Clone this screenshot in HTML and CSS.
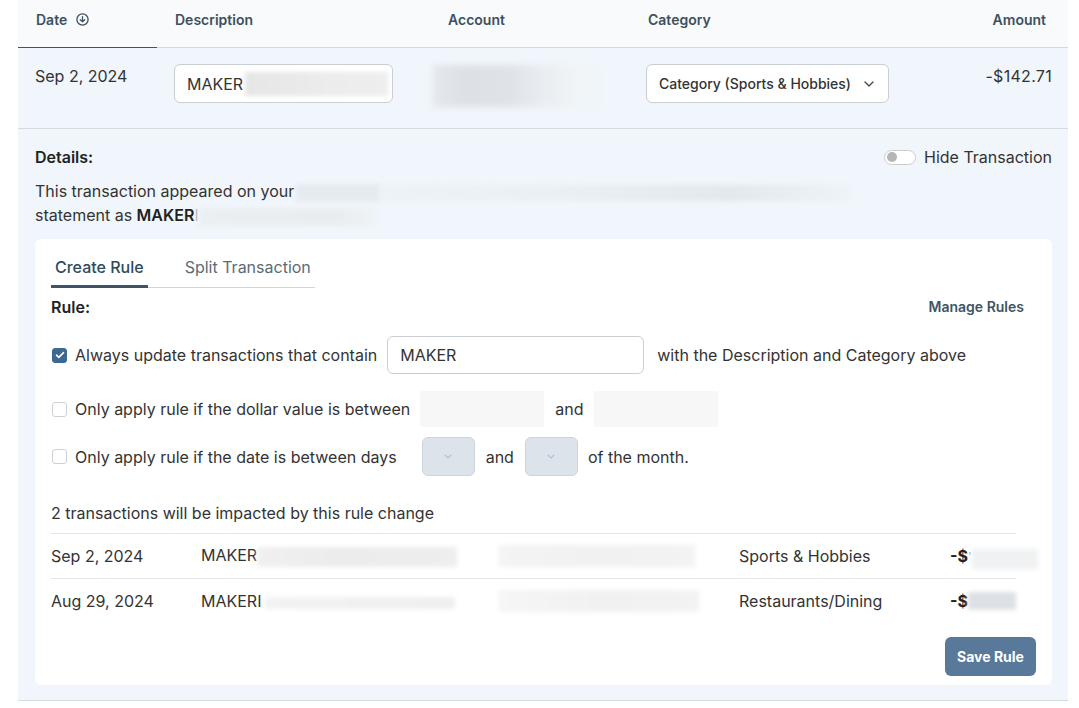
FILE: index.html
```html
<!DOCTYPE html>
<html lang="en">
<head>
<meta charset="utf-8">
<title>Transaction</title>
<link rel="stylesheet" href="styles.css">
</head>
<body>
<div class="table">
  <div class="thead">
    <div class="th th-date">Date
      <svg class="sort-icon" width="13" height="13" viewBox="0 0 13 13"><circle cx="6.5" cy="6.5" r="5.6" fill="none" stroke="#3d5060" stroke-width="1.3"/><path d="M6.5 3.6v5.2M4.3 6.7l2.2 2.2 2.2-2.2" fill="none" stroke="#3d5060" stroke-width="1.3" stroke-linecap="round" stroke-linejoin="round"/></svg>
    </div>
    <div class="th">Description</div>
    <div class="th">Account</div>
    <div class="th">Category</div>
    <div class="th th-amount">Amount</div>
  </div>

  <div class="trow">
    <div class="td td-date">Sep 2, 2024</div>
    <div class="td td-desc">
      <div class="text-input desc-input">MAKER<span class="blur blur-desc"></span></div>
    </div>
    <div class="td td-account"><span class="blur blur-account"></span></div>
    <div class="td td-cat">
      <div class="select-box">Category (Sports &amp; Hobbies)
        <svg class="chev" width="10" height="6" viewBox="0 0 10 6"><path d="M1 1l4 4 4-4" fill="none" stroke="#444" stroke-width="1.3" stroke-linecap="round" stroke-linejoin="round"/></svg>
      </div>
    </div>
    <div class="td td-amount">-$142.71</div>
  </div>

  <div class="details">
    <div class="details-head">
      <div class="details-title">Details:</div>
      <label class="toggle-wrap"><span class="toggle"><span class="knob"></span></span>Hide Transaction</label>
    </div>
    <p class="statement">This transaction appeared on your<span class="blur blur-s1"></span><span class="blur blur-s1b"></span><br>statement as <b>MAKER</b><span class="bar-i">I</span><span class="blur blur-s2"></span></p>

    <div class="card">
      <div class="tabs">
        <div class="tab active">Create Rule</div>
        <div class="tab">Split Transaction</div>
      </div>

      <div class="rule-head">
        <div class="rule-title">Rule:</div>
        <a class="manage">Manage Rules</a>
      </div>

      <div class="rule-line line1">
        <span class="cb checked"><svg width="10" height="8" viewBox="0 0 10 8"><path d="M1.5 4.2l2.3 2.2L8.5 1.6" fill="none" stroke="#fff" stroke-width="1.6" stroke-linecap="round" stroke-linejoin="round"/></svg></span>
        <span class="lbl">Always update transactions that contain</span>
        <div class="text-input contain-input">MAKER</div>
        <span class="lbl after-input">with the Description and Category above</span>
      </div>

      <div class="rule-line line2">
        <span class="cb"></span>
        <span class="lbl">Only apply rule if the dollar value is between</span>
        <div class="disabled-input"></div>
        <span class="lbl and">and</span>
        <div class="disabled-input"></div>
      </div>

      <div class="rule-line line3">
        <span class="cb"></span>
        <span class="lbl">Only apply rule if the date is between days</span>
        <div class="day-select first"><svg width="8" height="5" viewBox="0 0 8 5"><path d="M1 1l3 3 3-3" fill="none" stroke="#b8c2cc" stroke-width="1.1" stroke-linecap="round"/></svg></div>
        <span class="lbl and">and</span>
        <div class="day-select"><svg width="8" height="5" viewBox="0 0 8 5"><path d="M1 1l3 3 3-3" fill="none" stroke="#b8c2cc" stroke-width="1.1" stroke-linecap="round"/></svg></div>
        <span class="lbl month">of the month.</span>
      </div>

      <div class="impact">2 transactions will be impacted by this rule change</div>
      <div class="impact-list">
        <div class="irow">
          <div>Sep 2, 2024</div>
          <div>MAKER<span class="blur blur-l1"></span></div>
          <div><span class="blur blur-la"></span></div>
          <div>Sports &amp; Hobbies</div>
          <div class="iamt"><b>-$</b><span class="tick">'</span><span class="blur blur-amt1"></span></div>
        </div>
        <div class="irow">
          <div>Aug 29, 2024</div>
          <div>MAKERI<span class="blur blur-l2"></span></div>
          <div><span class="blur blur-lb"></span></div>
          <div>Restaurants/Dining</div>
          <div class="iamt"><b>-$</b><span class="blur blur-amt2"></span></div>
        </div>
      </div>

      <div class="actions">
        <button class="save">Save Rule</button>
      </div>
    </div>
  </div>
</div>
</body>
</html>
```

FILE: styles.css
```css
* { box-sizing: border-box; }
html, body { margin: 0; padding: 0; }
body {
  background: #ffffff;
  font-family: Inter, "Noto Sans", "Liberation Sans", sans-serif;
  font-size: 16px;
  color: #333;
}

.table {
  margin-left: 18px;
  width: 1050px;
}

.thead, .trow {
  display: grid;
  grid-template-columns: 139px 273px 200px 1fr 160px;
}

.thead {
  background: #f8fafb;
  height: 48px;
}
.th {
  padding: 12px 0 0 18px;
  font-size: 14px;
  font-weight: 600;
  line-height: 16px;
  color: #3d5060;
  border-bottom: 1px solid #d4dade;
  display: flex;
  align-items: flex-start;
}
.th-date { border-bottom-color: #3d5566; }
.sort-icon { margin-left: 9px; margin-top: 1px; }
.th-amount { justify-content: flex-end; padding-right: 22px; }

.trow {
  background: #f0f6fb;
  height: 81px;
  border-bottom: 1px solid #d4dade;
}
.td { padding-top: 16px; line-height: 24px; }
.td-date { padding-left: 17px; }
.td-desc { padding-left: 17px; }
.td-account { padding-left: 3px; padding-top: 17px; }
.td-cat { padding-left: 16px; }
.td-amount { text-align: right; padding-right: 16px; letter-spacing: 0.3px; }

.text-input {
  background: #fff;
  border: 1px solid #c9ced3;
  border-radius: 6px;
  padding-left: 12px;
  display: flex;
  align-items: center;
}
.desc-input { width: 219px; height: 39px; }

.select-box {
  width: 243px;
  height: 39px;
  background: #fff;
  border: 1px solid #c9ced3;
  border-radius: 6px;
  padding: 0 14px 0 12px;
  display: flex;
  align-items: center;
  justify-content: space-between;
  font-size: 14px;
  font-weight: 500;
  color: #333;
}
.chev { margin-top: 1px; }

.blur {
  display: inline-block;
  filter: blur(2px);
  vertical-align: middle;
}
.blur-desc { width: 143px; height: 24px; background: linear-gradient(90deg, #e6e6e6, #ececec 60%, #eeeeee); margin-left: 2px; }
.blur-account { width: 168px; height: 42px; filter: blur(3px); background: linear-gradient(90deg, #e4e8ec 0%, #dde1e6 20%, #dfe3e7 45%, #e9edf1 65%, #f0f4f7 85%, rgba(240,246,251,0) 100%); }
.blur-s1 { width: 84px; height: 18px; background: #e6ebef; margin-left: 2px; }
.blur-s1b { width: 470px; height: 16px; background: linear-gradient(90deg, rgba(235,240,244,0.6), #eaeff3 40%, #e3e8ec 75%, rgba(233,238,242,0.3)); }
.blur-s2 { width: 178px; height: 18px; background: linear-gradient(90deg, #eceff2, #eaedf0 80%, rgba(236,240,243,0.4)); }
.bar-i { color: #aaa; font-weight: 300; }
.blur-l1 { width: 200px; height: 20px; background: linear-gradient(90deg, #f0f0f0, #ececec 40%, #eeeeee); }
.blur-l2 { width: 190px; height: 12px; background: linear-gradient(90deg, #f2f2f2, #efefef); margin-left: 4px; }
.blur-la { width: 196px; height: 22px; background: linear-gradient(90deg, #f4f4f4, #f1f1f1 50%, #f3f3f3); }
.blur-lb { width: 200px; height: 22px; background: linear-gradient(90deg, #f6f6f6, #f1f1f1 50%, #f3f3f3); }
.blur-amt1 { width: 66px; height: 20px; background: #f0f1f3; margin-top: 6px; }
.blur-amt2 { width: 48px; height: 18px; background: #dde1e6; }
.tick { color: #aaa; font-size: 12px; }

.details {
  background: #f0f6fb;
  padding: 16px 16px 15px 17px;
  border-bottom: 1px solid #d4dade;
}
.details-head {
  display: flex;
  justify-content: space-between;
  align-items: center;
  line-height: 24px;
}
.details-title { font-weight: 600; color: #222; }
.toggle-wrap { display: flex; align-items: center; color: #333; }
.toggle {
  width: 32px;
  height: 15px;
  border: 1px solid #ccc;
  border-radius: 8px;
  background: #fff;
  margin-right: 8px;
  display: flex;
  align-items: center;
  padding-left: 2px;
}
.knob { width: 10px; height: 10px; border-radius: 50%; background: #b5b5b5; }

.statement {
  margin: 10px 0 12px 0;
  line-height: 24px;
  color: #333;
}
.statement b { font-weight: 600; color: #222; }

.card {
  background: #fff;
  border-radius: 6px;
  padding: 16px 16px 9px 16px;
}

.tabs {
  display: flex;
  width: 264px;
  border-bottom: 1px solid #cfd5da;
}
.tab {
  padding: 0 4px 6px 4px;
  line-height: 24px;
  color: #5a6b78;
  margin-bottom: -1px;
  border-bottom: 3px solid transparent;
}
.tab + .tab { margin-left: 33px; }
.tab.active { color: #2f4a5c; font-weight: 500; border-bottom-color: #3d5566; }

.rule-head {
  display: flex;
  justify-content: space-between;
  align-items: center;
  margin-top: 7px;
  line-height: 24px;
}
.rule-title { font-weight: 600; color: #222; }
.manage { font-size: 14px; font-weight: 600; color: #3d5566; margin-right: 12px; }

.rule-line {
  display: flex;
  align-items: center;
  line-height: 24px;
}
.line1 { margin-top: 17px; height: 38px; }
.line2 { margin-top: 17px; height: 36px; }
.line3 { margin-top: 10px; height: 39px; }

.cb {
  width: 15px;
  height: 15px;
  border: 1px solid #cdd2d6;
  border-radius: 3px;
  background: #fff;
  margin-left: 1px;
  margin-right: 8px;
  display: flex;
  align-items: center;
  justify-content: center;
}
.cb.checked { background: #3c6891; border-color: #3c6891; }

.contain-input { width: 257px; height: 38px; margin-left: 10px; }
.after-input { margin-left: 13px; }

.disabled-input { width: 124px; height: 36px; background: #f7f7f7; }
.line2 .disabled-input:first-of-type { margin-left: 10px; }
.and { margin: 0 11px; }

.day-select {
  width: 53px;
  height: 39px;
  background: #dde3ea;
  border: 1px solid #ccd4dc;
  border-radius: 6px;
  display: flex;
  align-items: center;
  justify-content: center;
}
.day-select.first { margin-left: 25px; }
.month { margin-left: 10px; }

.impact {
  margin-top: 25px;
  line-height: 24px;
  padding-bottom: 8px;
}
.impact-list { margin-right: 20px; }
.irow {
  display: grid;
  grid-template-columns: 150px 298px 240px 211px 1fr;
  height: 45px;
  align-items: center;
  border-top: 1px solid #e3e6e9;
  white-space: nowrap;
}
.irow b { font-weight: 700; color: #222; }
.iamt { display: flex; align-items: center; }

.actions {
  display: flex;
  justify-content: flex-end;
  margin-top: 14px;
}
.save {
  width: 91px;
  height: 39px;
  background: #58799a;
  color: #fff;
  border: none;
  border-radius: 6px;
  font-family: Inter, "Noto Sans", sans-serif;
  font-size: 14px;
  font-weight: 700;
}
```
